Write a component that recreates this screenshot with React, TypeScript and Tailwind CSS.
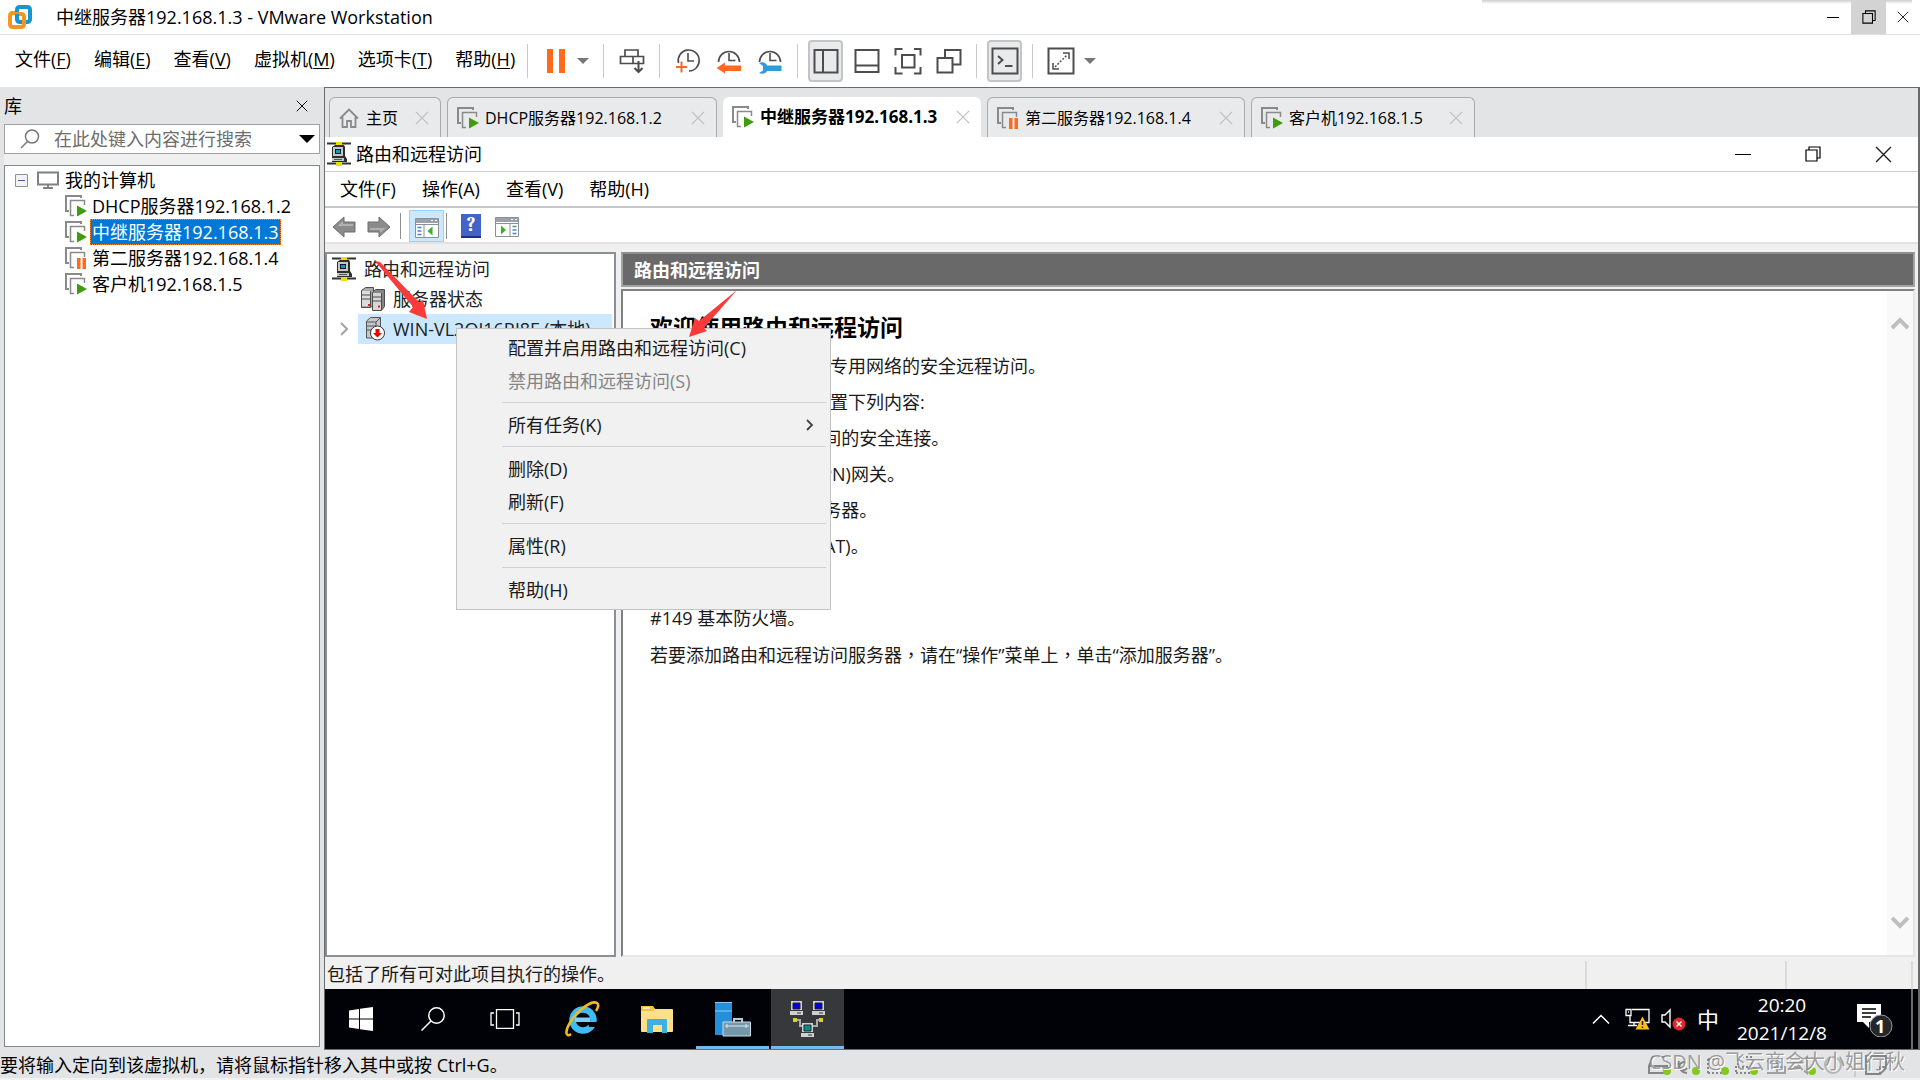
import type { ReactNode } from 'react';

function VmIcon({ paused = false }: { paused?: boolean }) {
  return (
    <svg className="h-[22px] w-[22px] shrink-0" viewBox="0 0 22 22" fill="none">
      <path d="M4 16H1V1h15v2" stroke="#8a8a8a" strokeWidth="2" />
      <path d="M9 20.500H5.500V5.500H19.500V10" stroke="#8a8a8a" strokeWidth="1.500" />
      {paused ? (
        <path d="M12 11h3.500v11H12zM17.500 11H21v11h-3.500z" fill="#ff6a1f" />
      ) : (
        <path d="M12 10.500L22 16L12 21.500Z" fill="#3f9c0f" />
      )}
    </svg>
  );
}

function RouterIcon() {
  return (
    <svg className="h-6 w-6 shrink-0" viewBox="0 0 24 24">
      <path d="M0 1.500h24M0 21.500h24" stroke="#333" strokeWidth="2" />
      <path d="M9 0h6v4H9zM9 20h6v4H9z" fill="#e8e000" />
      <path d="M5 5l3-2h9l1 2v9l2 3v3H5v-4z" fill="#2d2f2d" />
      <path d="M6 5h10v9H6zM5 16h12v3H5z" fill="#c3cac5" />
      <path d="M8 7h6v5H8z" fill="#113" />
      <path d="M9 8h4v3H9z" fill="#00a5a5" />
      <path d="M7 17.500h8" stroke="#555" />
    </svg>
  );
}

function CloseIcon({ size, color }: { size: number; color: string }) {
  return (
    <svg width={size} height={size} viewBox="0 0 16 16" fill="none" stroke={color} strokeWidth="1.300">
      <path d="M1 1L15 15M15 1L1 15" />
    </svg>
  );
}

function RestoreIcon({ size }: { size: number }) {
  return (
    <svg width={size} height={size} viewBox="0 0 16 16" fill="none" stroke="#000" strokeWidth="1.200">
      <path d="M1 4h11v11H1zM4 4V1h11v11h-3" />
    </svg>
  );
}

const hostMenus = [
  ['文件', 'F'],
  ['编辑', 'E'],
  ['查看', 'V'],
  ['虚拟机', 'M'],
  ['选项卡', 'T'],
  ['帮助', 'H'],
];

function Separator() {
  return <div className="mx-1 h-[34px] w-px bg-[#c9c9c9]" />;
}

function ToolButton({ label, active = false, children }: { label: string; active?: boolean; children: ReactNode }) {
  return (
    <button
      aria-label={label}
      className={
        active
          ? 'flex h-[42px] w-[35px] items-center justify-center rounded border-2 border-[#c4c4c4] bg-[#e9eaec]'
          : 'flex h-[42px] w-[35px] items-center justify-center'
      }
    >
      <svg className="h-7 w-7 shrink-0" viewBox="0 0 28 28" fill="none" stroke="#4d4d4f" strokeWidth="2">
        {children}
      </svg>
    </button>
  );
}

function Clock() {
  return <path d="M14 6v7.500h6.500M3.500 15A10.500 10.500 0 1 1 24.500 15" strokeWidth="1.600" />;
}

function Toolbar() {
  return (
    <div className="flex items-center gap-[6px]">
      <Separator />
      <div className="flex items-center">
        <ToolButton label="暂停">
          <path d="M5 2h6v24H5zM17 2h6v24h-6z" fill="#ff6a1f" stroke="none" />
        </ToolButton>
        <button aria-label="电源" className="flex w-5 justify-center">
          <svg className="h-[6px] w-3" viewBox="0 0 12 6">
            <path d="M0 0h12L6 6z" fill="#777" />
          </svg>
        </button>
      </div>
      <Separator />
      <ToolButton label="发送">
        <path d="M7 9V3h13v6M2.500 9.500h23v7h-23zM15 10v6" strokeWidth="1.700" />
        <path d="M20.500 14v11M16.500 21l4 4l4-4" strokeWidth="2" />
      </ToolButton>
      <Separator />
      <ToolButton label="快照">
        <path d="M14 6v8h6M4.500 16A10.500 10.500 0 1 1 15 24" strokeWidth="1.600" />
        <path d="M2 20h11M7.500 14.500v11" stroke="#f26a2a" />
      </ToolButton>
      <ToolButton label="恢复快照">
        <Clock />
        <path d="M1.500 21L10 15.500v3h16v5.500H10v2.500z" fill="#ff6a1f" stroke="none" />
      </ToolButton>
      <ToolButton label="管理快照">
        <Clock />
        <path d="M3 16c3-1.500 7-.5 8 2.500h14.500v5.500H11c-1 2.500-5 3.500-8 2l4-2.500v-4.500z" fill="#2f9ade" stroke="none" />
      </ToolButton>
      <Separator />
      <ToolButton label="显示库" active>
        <path d="M2.500 3h23v22.500h-23zM11 3v22.500" />
      </ToolButton>
      <ToolButton label="缩略图">
        <path d="M2.500 3h23v22h-23zM2.500 18.500h23" />
      </ToolButton>
      <ToolButton label="全屏">
        <path d="M1.500 8.500V2h7M20 2h6.500v6.500M26.500 20v6.500H20M8.500 26.500h-7V20M8 8h12.500v12.500H8z" />
      </ToolButton>
      <ToolButton label="Unity">
        <path d="M2.500 11h15v14.500h-15zM10 10.500V3h15.500v14.500h-7.500" />
      </ToolButton>
      <Separator />
      <ToolButton label="控制台" active>
        <path d="M1.500 1.500h25v25h-25zM7 9l4.500 4L7 17M14 19h7.500" />
      </ToolButton>
      <Separator />
      <ToolButton label="拉伸">
        <path d="M1.500 1.500h25v25h-25z" />
        <path d="M16 6h6v6M6 16v6h6" strokeWidth="1.500" />
        <path d="M8 20L20 8" strokeWidth="1.500" strokeDasharray="2 1.500" />
      </ToolButton>
      <svg className="h-[6px] w-3" viewBox="0 0 12 6">
        <path d="M0 0h12L6 6z" fill="#777" />
      </svg>
    </div>
  );
}

const machines = [
  { name: 'DHCP服务器192.168.1.2', paused: false, selected: false },
  { name: '中继服务器192.168.1.3', paused: false, selected: true },
  { name: '第二服务器192.168.1.4', paused: true, selected: false },
  { name: '客户机192.168.1.5', paused: false, selected: false },
];

function Library() {
  return (
    <aside className="flex w-[320px] shrink-0 flex-col pl-1">
      <div className="flex h-[37px] items-center justify-between pr-3">
        <span>库</span>
        <button aria-label="关闭库">
          <CloseIcon size={12} color="#000" />
        </button>
      </div>
      <label className="flex h-[30px] items-center border border-[#a0a0a0] bg-white pl-[15px]">
        <svg className="h-5 w-5 shrink-0" viewBox="0 0 20 20" fill="none" stroke="#777" strokeWidth="1.500">
          <circle cx="12" cy="7.500" r="6.500" />
          <path d="M7.500 12.500L1 19" />
        </svg>
        <input
          aria-label="搜索"
          placeholder="在此处键入内容进行搜索"
          className="ml-[14px] min-w-0 flex-1 outline-none placeholder:text-[#6d6d6d]"
        />
        <svg className="mr-1 h-2 w-4" viewBox="0 0 16 8">
          <path d="M0 0h16L8 8z" fill="#000" />
        </svg>
      </label>
      <div className="h-[11px] bg-[#f0f0f0]" />
      <div className="mb-[3px] flex-1 border border-[#828790] bg-white pt-px">
        <div className="flex h-[26px] items-center pl-[10px]">
          <svg className="h-[13px] w-[13px]" viewBox="0 0 13 13" fill="none">
            <path d="M.5.500h12v12H.500z" fill="#f3f3f3" stroke="#919191" />
            <path d="M3 6.500h7" stroke="#3c5fa8" />
          </svg>
          <svg className="ml-[9px] h-[18px] w-[22px]" viewBox="0 0 22 18" fill="none" stroke="#808080" strokeWidth="2">
            <path d="M1 1.500h20v12H1zM11 14v3M6 17h10" />
          </svg>
          <span className="ml-[6px]">我的计算机</span>
        </div>
        {machines.map((m) => (
          <div key={m.name} className="flex h-[26px] items-center pl-[60px]">
            <VmIcon paused={m.paused} />
            <span
              className={
                m.selected
                  ? 'ml-[3px] flex h-[26px] items-center border border-dotted border-[#ff8728] bg-[#0078d7] px-px text-white'
                  : 'ml-1 flex h-[26px] items-center px-px'
              }
            >
              {m.name}
            </span>
          </div>
        ))}
      </div>
    </aside>
  );
}

const tabs = [
  { name: 'DHCP服务器192.168.1.2', width: 'w-[270px]', paused: false, active: false },
  { name: '中继服务器192.168.1.3', width: 'w-[258px]', paused: false, active: true },
  { name: '第二服务器192.168.1.4', width: 'w-[258px]', paused: true, active: false },
  { name: '客户机192.168.1.5', width: 'w-[224px]', paused: false, active: false },
];

function Tabs() {
  return (
    <div className="flex h-[49px] items-end gap-[6px] pl-1 text-base">
      <button className="flex h-10 w-[112px] items-center rounded-t-md border border-b-0 border-[#a9a9a9] bg-[#e9eaec] pr-[11px] pl-[9px]">
        <svg className="h-5 w-5" viewBox="0 0 20 20" fill="none" stroke="#8a8a8a" strokeWidth="1.800">
          <path d="M1 10.500L10 1.500L19 10.500M3.500 9v10H8v-6h4v6h4.500V9" />
        </svg>
        <span className="ml-[7px] flex-1 text-left">主页</span>
        <CloseIcon size={14} color="#bdbdbd" />
      </button>
      {tabs.map((t) => (
        <button
          key={t.name}
          className={`${t.width} flex h-10 items-center rounded-t-md pr-[11px] pl-[9px] ${
            t.active ? 'bg-white text-[17px] font-bold' : 'border border-b-0 border-[#a9a9a9] bg-[#e9eaec]'
          }`}
        >
          <VmIcon paused={t.paused} />
          <span className="ml-[6px] flex-1 text-left whitespace-nowrap">{t.name}</span>
          <CloseIcon size={14} color="#bdbdbd" />
        </button>
      ))}
    </div>
  );
}

function PanelIcon({ flip = false }: { flip?: boolean }) {
  return (
    <svg className="h-[22px] w-6" viewBox="0 0 24 22">
      <path d="M.5 1.500h23v19H.500z" fill="#fff" stroke="#8a9097" />
      <path d="M1 2h22v4H1z" fill="#9aa1aa" />
      <path d="M16 3.500h2M20 3.500h2" stroke="#fff" />
      <path d="M1 7.500h22" stroke="#8a9097" />
      {flip ? (
        <>
          <path d="M15 8v12" stroke="#8a9097" />
          <path d="M6 9.500l5 4.500l-5 4.500z" fill="#35b325" />
          <path d="M17.500 10.500h4M17.500 14h4M17.500 17.500h4" stroke="#4b84c8" strokeWidth="1.500" />
        </>
      ) : (
        <>
          <path d="M9 8v12" stroke="#8a9097" />
          <path d="M17.500 9.500l-5 4.500l5 4.500z" fill="#35b325" />
          <path d="M2.500 10.500h4M2.500 14h4M2.500 17.500h4" stroke="#4b84c8" strokeWidth="1.500" />
        </>
      )}
    </svg>
  );
}

function ArrowIcon({ className }: { className: string }) {
  return (
    <svg className={className} viewBox="0 0 24 22">
      <path d="M1 11L12 1v5h11v10H12v5z" fill="#8b8b8b" stroke="#6f6f6f" />
      <path d="M4 11l7-6v3h10v2H6z" fill="#b1b1b1" />
    </svg>
  );
}

function ServerIcon() {
  return (
    <svg className="h-6 w-6" viewBox="0 0 24 24" stroke="#4d4d4d">
      <path d="M.5 3.500l4-3h8v18l-3 2h-9z" fill="#a9a9a9" />
      <path d="M1 4h8v15H1z" fill="#dcdcdc" stroke="none" />
      <path d="M11.500 5.500l3-3h9v17l-3 4h-9z" fill="#858585" />
      <path d="M12 6h8v17h-8z" fill="#d5d5d5" stroke="none" />
      <path d="M1 8h8M1 12h8M12 10h8M12 14h8M9.500 4v16M20.500 6v17" fill="none" />
      <path d="M7 18h2M17 19.500h2" stroke="#e02020" strokeWidth="2" />
    </svg>
  );
}

function StoppedServerIcon() {
  return (
    <svg className="h-6 w-5" viewBox="0 0 20 24">
      <path d="M1.500 4l4-3.500h10V19l-3 2h-11z" fill="#c7c7c7" stroke="#555" />
      <path d="M2 5h9l4-4M11 5v15M2 9h9M2 13h9" stroke="#555" fill="none" />
      <circle cx="12.500" cy="16" r="7" fill="#fff" stroke="#333" />
      <path d="M10.500 12h4v4h2.500l-4.500 4.500L8 16h2.500z" fill="#f00000" />
    </svg>
  );
}

const contextMenu = [
  [{ label: '配置并启用路由和远程访问(C)' }, { label: '禁用路由和远程访问(S)', disabled: true }],
  [{ label: '所有任务(K)', submenu: true }],
  [{ label: '删除(D)' }, { label: '刷新(F)' }],
  [{ label: '属性(R)' }],
  [{ label: '帮助(H)' }],
] as { label: string; disabled?: boolean; submenu?: boolean }[][];

function ContextMenu() {
  return (
    <div className="absolute top-[191px] left-[131px] w-[375px] border border-[#c3c3c3] bg-[#f1f1f1] pt-[2px] pr-1 pb-[3px]">
      {contextMenu.map((group, i) => (
        <div key={i}>
          {i > 0 && <div className="mt-[5px] mb-[5px] ml-[45px] h-px bg-[#d2d2d2]" />}
          {group.map((item) => (
            <button
              key={item.label}
              disabled={item.disabled}
              className={`flex h-[33px] w-full items-center justify-between pr-3 pl-[51px] ${
                item.disabled ? 'text-[#858585]' : 'text-[#1a1a1a]'
              }`}
            >
              {item.label}
              {item.submenu && (
                <svg className="h-3 w-2" viewBox="0 0 8 12" fill="none" stroke="#444" strokeWidth="1.800">
                  <path d="M1 1l5 5l-5 5" />
                </svg>
              )}
            </button>
          ))}
        </div>
      ))}
    </div>
  );
}

function Arrows() {
  return (
    <svg className="pointer-events-none absolute top-0 left-0 h-[210px] w-[420px]" viewBox="0 0 420 210" fill="#fb3a3a">
      <path d="M50 124L55 125L94 165L98 163L102 182L84 175L88 170Z" />
      <path d="M412 153L379 191L382 194L364 200L370 181L374 184Z" />
    </svg>
  );
}

const paragraphs = [
  '路由和远程访问提供对专用网络的安全远程访问。',
  '使用路由和远程访问配置下列内容:',
  '#144 两个专用网络之间的安全连接。',
  '#145 虚拟专用网络(VPN)网关。',
  '#146 拨号远程访问服务器。',
  '#147 网络地址转换(NAT)。',
  '#148 LAN 路由。',
  '#149 基本防火墙。',
];

function Chevron({ down = false }: { down?: boolean }) {
  return (
    <svg className="h-[14px] w-[18px]" viewBox="0 0 18 14" fill="none" stroke="#bfbfbf" strokeWidth="4">
      <path d={down ? 'M1 3l8 8l8-8' : 'M1 12l8-8l8 8'} />
    </svg>
  );
}

function GuestConsole() {
  return (
    <>
      <div className="flex h-[35px] items-center border-b border-[#cfcfcf] bg-white pl-[2px]">
        <RouterIcon />
        <h1 className="ml-[5px] flex-1">路由和远程访问</h1>
        <button aria-label="最小化" className="mr-[54px] h-4 w-4">
          <div className="h-px bg-black" />
        </button>
        <button aria-label="还原" className="mr-[54px]">
          <RestoreIcon size={16} />
        </button>
        <button aria-label="关闭" className="mr-[26px]">
          <CloseIcon size={17} color="#222" />
        </button>
      </div>
      <div className="flex h-9 items-center gap-[26px] border-b-2 border-[#c5c7ca] bg-white pl-[15px]">
        <button>文件(F)</button>
        <button>操作(A)</button>
        <button>查看(V)</button>
        <button>帮助(H)</button>
      </div>
      <div className="flex h-9 items-center border-b-2 border-[#e2e2e2] bg-white pt-px pl-[7px]">
        <button aria-label="后退" className="pt-[3px]">
          <ArrowIcon className="h-[22px] w-6" />
        </button>
        <button aria-label="前进" className="ml-[11px] pt-[3px]">
          <ArrowIcon className="h-[22px] w-6 rotate-180" />
        </button>
        <div className="ml-[9px] h-[26px] w-px bg-[#8f8f8f]" />
        <button aria-label="显示控制台树" className="ml-2 flex h-8 w-[35px] items-center justify-center border border-[#99d1ff] bg-[#cce8ff] pt-1">
          <PanelIcon />
        </button>
        <div className="ml-[2px] h-[26px] w-px bg-[#8f8f8f]" />
        <button aria-label="帮助" className="ml-[14px] flex h-6 w-5 items-center justify-center border-b-2 border-[#1d3287] bg-[#4264c8] font-serif text-xl font-bold text-white">
          ?
        </button>
        <button aria-label="操作窗格" className="ml-[14px] pt-[3px]">
          <PanelIcon flip />
        </button>
      </div>
      <div className="flex flex-1 gap-[5px] bg-[#f0f0f0] pt-2 pr-[3px]">
        <div className="w-[291px] shrink-0 border-2 border-[#8b9097] bg-white text-[#222]">
          <div className="flex h-[30px] items-center gap-2 pl-[5px]">
            <RouterIcon />
            <span>路由和远程访问</span>
          </div>
          <div className="flex h-[30px] items-center gap-2 pl-[34px]">
            <ServerIcon />
            <span>服务器状态</span>
          </div>
          <div className="flex h-[30px] items-center pr-[2px] pl-[13px]">
            <svg className="h-[14px] w-[9px]" viewBox="0 0 9 14" fill="none" stroke="#a3a3a3" strokeWidth="2">
              <path d="M1 1l6 6l-6 6" />
            </svg>
            <div className="ml-[9px] flex h-[30px] flex-1 items-center bg-[#cce8ff] pl-[7px]">
              <StoppedServerIcon />
              <span className="ml-2 whitespace-nowrap">WIN-VL2QJ16RJ8F (本地)</span>
            </div>
          </div>
        </div>
        <div className="flex min-w-0 flex-1 flex-col">
          <div className="flex h-[35px] items-center border-2 border-[#a3a3a3] border-t-[#8e8e8e] bg-[#696969] pl-[11px] font-bold text-white">
            路由和远程访问
          </div>
          <div className="mt-[2px] flex flex-1 border-2 border-[#808080] border-r-[#e6e6e6] border-b-[#e6e6e6] bg-white">
            <div className="flex-1 pt-[19px] pl-[27px]">
              <h2 className="text-[23px] leading-[34px] font-bold">欢迎使用路由和远程访问</h2>
              <div className="pt-1 leading-9 text-[#1a1a1a]">
                {paragraphs.map((p) => (
                  <p key={p}>{p}</p>
                ))}
                <p>
                  若要添加路由和远程访问服务器<span className="font-['Noto_Sans_CJK_TC',sans-serif]">，</span>
                  请在“操作”菜单上<span className="font-['Noto_Sans_CJK_TC',sans-serif]">，</span>单击“添加服务器”。
                </p>
              </div>
            </div>
            <div className="flex w-[26px] flex-col items-center justify-between bg-[#f9f9f9] pt-[25px] pb-[26px]">
              <Chevron />
              <Chevron down />
            </div>
          </div>
        </div>
      </div>
      <div className="flex h-8 bg-[#f0f0f0] pr-[5px] leading-8">
        <span className="flex-1 pt-px pl-[2px] text-[#1a1a1a]">包括了所有可对此项目执行的操作。</span>
        <div className="mt-1 w-[200px] border-l-2 border-[#dadada]" />
        <div className="mt-1 w-[128px] border-x-2 border-[#dadada]" />
      </div>
    </>
  );
}

function TaskButton({ label, state = '', children }: { label: string; state?: string; children: ReactNode }) {
  return (
    <button aria-label={label} className={`flex h-full w-[73px] items-center justify-center border-b-[3px] pt-[3px] ${state || 'border-transparent'}`}>
      <svg className="h-9 w-9" viewBox="0 0 36 36">
        {children}
      </svg>
    </button>
  );
}

function SmallPc({ x, y, screen }: { x: number; y: number; screen: string }) {
  return (
    <g transform={`translate(${x} ${y})`}>
      <path d="M1 0h11v9H1zM0 10h13v4H0z" fill="#d0d0d0" />
      <path d="M3 2h7v6H3z" fill={screen} stroke="#222" />
      <path d="M7 12h4" stroke="#333" />
    </g>
  );
}

function Taskbar() {
  return (
    <div className="flex h-[60px] items-center bg-[#000207] text-white">
      <button aria-label="开始" className="flex w-[72px] justify-center">
        <svg className="h-6 w-6" viewBox="0 0 24 24" fill="#fff">
          <path d="M0 3.500l10-1.500v9.500H0zM11 1.800L24 0v11.500H11zM0 12.500h10V22L0 20.500zM11 12.500h13V24l-13-1.800z" />
        </svg>
      </button>
      <button aria-label="搜索" className="flex w-[72px] justify-center">
        <svg className="h-6 w-6" viewBox="0 0 24 24" fill="none" stroke="#fff" strokeWidth="1.500">
          <circle cx="15.500" cy="8.500" r="7.700" />
          <path d="M10 14L.5 23.500" />
        </svg>
      </button>
      <button aria-label="任务视图" className="flex w-[72px] justify-center">
        <svg className="h-5 w-[30px]" viewBox="0 0 30 20" fill="none" stroke="#fff" strokeWidth="1.300">
          <path d="M6.500.700h17v18.600h-17zM4 4H1v12h3M26 4h3v12h-3" />
        </svg>
      </button>
      <div className="ml-[5px] flex h-full gap-[2px]">
        <TaskButton label="Internet Explorer">
          <circle cx="18" cy="19" r="10.500" fill="none" stroke="#3fbdf2" strokeWidth="6.500" />
          <path d="M10 16.500h15v4.500H10z" fill="#79d5f8" />
          <path d="M23 21h12v5H24z" fill="#000207" />
          <path d="M6 33c-5 4-7-2 0-13C14 8 27-1 32 2c2 1.500 1 5-1 8" fill="none" stroke="#f2bb1d" strokeWidth="2.600" />
        </TaskButton>
        <TaskButton label="文件资源管理器">
          <path d="M1 6q0-1 1-1h10l3 3h17q1 0 1 1v21q0 1-1 1H2q-1 0-1-1z" fill="#ffe08a" />
          <path d="M1 5h12l2 3l-2 2H1z" fill="#f8c33c" />
          <path d="M3 7h7" stroke="#fff" strokeWidth="1.500" />
          <path d="M7 19q0-1 1-1h18q1 0 1 1v13h-5v-8h-9v8H7z" fill="#3cb2e4" />
        </TaskButton>
        <TaskButton label="服务器管理器" state="border-[#76b9ed]">
          <path d="M0 1h17v33H0z" fill="#2490dc" />
          <path d="M0 1.500h17M0 10h17" stroke="#8ccbf4" />
          <path d="M19 22v-4h8v4" fill="none" stroke="#b8cbd5" strokeWidth="2" />
          <path d="M8 21h27.500v14H8z" fill="#7597aa" stroke="#c9dce6" />
          <path d="M10 25h24M12 23v4M31 23v4" stroke="#dce8ee" />
        </TaskButton>
        <TaskButton label="路由和远程访问" state="border-[#76b9ed] bg-[#36383c]">
          <path d="M4 19h6v6h5M32 19h-5v6h-4" fill="none" stroke="#aaa" strokeWidth="2" />
          <path d="M3 17h4v4H3zM29 17h4v4h-4z" fill="#d6cf28" />
          <SmallPc x={0} y={0} screen="#0000e0" />
          <SmallPc x={22} y={0} screen="#0000e0" />
          <SmallPc x={11} y={22} screen="#008f8f" />
        </TaskButton>
      </div>
      <div className="flex-1" />
      <button aria-label="显示隐藏的图标" className="mr-[15px]">
        <svg className="h-[10px] w-[18px]" viewBox="0 0 18 10" fill="none" stroke="#fff" strokeWidth="1.500">
          <path d="M1 9.500L9 1.500L17 9.500" />
        </svg>
      </button>
      <svg className="mr-[11px] h-6 w-[25px]" viewBox="0 0 25 24" fill="none" stroke="#fff" strokeWidth="1.300">
        <path d="M7 2.500h17v13H5V9M3 18.500h9M9 16v3M1 2.500h5v6H1zM3 5h1" />
        <path d="M17.500 9.500L24.500 22.500H10.500Z" fill="#fcbf12" stroke="none" />
        <path d="M17.500 14v4M17.500 19.500v1.500" stroke="#222" strokeWidth="1.500" />
      </svg>
      <svg className="mr-[11px] h-6 w-[25px]" viewBox="0 0 25 24" fill="none" stroke="#fff" strokeWidth="1.400">
        <path d="M1 8h3l5-5v17l-5-5H1z" />
        <circle cx="18" cy="17" r="6.500" fill="#e0252c" stroke="none" />
        <path d="M15.500 14.500l5 5M20.500 14.500l-5 5" />
      </svg>
      <span className="text-[22px] leading-6">中</span>
      <div className="ml-[10px] w-[106px] text-center text-[19px] leading-7">
        <div>20:20</div>
        <div>2021/12/8</div>
      </div>
      <button aria-label="通知" className="relative ml-[22px] h-9 w-9">
        <svg className="h-9 w-9" viewBox="0 0 36 36" fill="none">
          <path d="M0 3h24v18H12v6l-6-6H0z" fill="#fff" />
          <path d="M5 8h14M5 12h14M5 16h9" stroke="#000" strokeWidth="1.300" />
          <circle cx="24" cy="25" r="11" fill="#26272a" stroke="#999" />
        </svg>
        <span className="absolute top-[15px] left-[18px] text-lg leading-5 font-bold">1</span>
      </button>
      <div className="ml-[18px] h-full w-[2px] bg-[#6b6b6b]" />
      <div className="w-[5px]" />
    </div>
  );
}

function StatusBar() {
  return (
    <footer className="relative flex h-[30px] items-center justify-between border-b-2 border-[#f2f2f2] bg-[#e3e4e6] pt-[2px] pr-[30px]">
      <span>要将输入定向到该虚拟机，请将鼠标指针移入其中或按 Ctrl+G。</span>
      <svg className="h-6 w-[242px]" viewBox="0 0 242 24" fill="none" stroke="#858585" strokeWidth="2">
        <path d="M4 4h16M1 13l4-10M1 13h18v7H1zM31 8a9 9 0 0 0 8 12M38 10a4 4 0 1 0 1 5" />
        <path d="M60 20h14M60 6v14M60 6h12M88 20h14M88 13v7M90 4h14v10H90z" strokeDasharray="2 2" />
        <path d="M119 8h10v12h-10M125 14h12v6h-12M146 10h5l8-6v16l-8-6h-5z" stroke="#a0a0a0" />
        <circle cx="185" cy="12" r="8" stroke="#b5b5b5" />
        <path d="M207 0v24" stroke="#ccc" />
        <path d="M218 3h20v12l-6 6h-14zM238 14h-6v6" />
        <g fill="#82c91e" stroke="none">
          <circle cx="19" cy="18" r="4" />
          <circle cx="48" cy="18" r="4" />
          <circle cx="77" cy="18" r="4" />
          <circle cx="106" cy="18" r="4" />
          <circle cx="164" cy="18" r="4" />
        </g>
      </svg>
      <span className="absolute top-0 right-[15px] text-xl leading-6 text-[#858585]/80 [text-shadow:1px_1px_0_#fff]">
        CSDN @飞云商会大小姐行秋
      </span>
    </footer>
  );
}

export default function App() {
  return (
    <div className="flex min-h-screen flex-col bg-[#e3e4e6] font-['Open_Sans','Noto_Sans_CJK_SC',sans-serif] text-lg leading-6 text-black">
      <header className="relative flex h-[35px] items-center border-b border-[#e0e0e0] bg-white pl-2">
        <div className="absolute top-0 right-2 h-1 w-[430px] bg-linear-to-b from-[#cfcfcf] to-white" />
        <svg className="h-6 w-6" viewBox="0 0 24 24" fill="none" strokeWidth="4">
          <path d="M9 15V5q0-3 3-3h7q3 0 3 3v9q0 3-3 3h-7" stroke="#1795d1" />
          <path d="M7 8H5q-3 0-3 3v8q0 3 3 3h8q3 0 3-3v-7q0-3-3-3H7" stroke="#f7941d" />
          <path d="M9 9v5q0 3 3 3h2" stroke="#1795d1" />
        </svg>
        <span className="ml-6 flex-1">中继服务器192.168.1.3 - VMware Workstation</span>
        <button aria-label="最小化" className="relative mr-3 flex h-full w-3 items-center">
          <div className="h-px w-3 bg-black" />
        </button>
        <button aria-label="还原" className="relative flex h-full w-[35px] items-center justify-center bg-[#d3d3d3]">
          <RestoreIcon size={14} />
        </button>
        <button aria-label="关闭" className="relative flex h-full w-[34px] items-center justify-center">
          <CloseIcon size={12} color="#222" />
        </button>
      </header>
      <nav className="flex h-[52px] items-center bg-white pl-[15px]">
        <div className="mr-2 flex gap-[23px] pb-1 whitespace-nowrap">
          {hostMenus.map(([name, key]) => (
            <button key={key}>
              {name}(<u className="underline-offset-2">{key}</u>)
            </button>
          ))}
        </div>
        <Toolbar />
      </nav>
      <main className="flex flex-1">
        <Library />
        <section className="ml-1 flex min-w-0 flex-1 flex-col border border-[#6b6b6b] border-r-2">
          <Tabs />
          <div className="relative flex flex-1 flex-col">
            <GuestConsole />
            <Taskbar />
            <ContextMenu />
            <Arrows />
          </div>
        </section>
      </main>
      <StatusBar />
    </div>
  );
}
